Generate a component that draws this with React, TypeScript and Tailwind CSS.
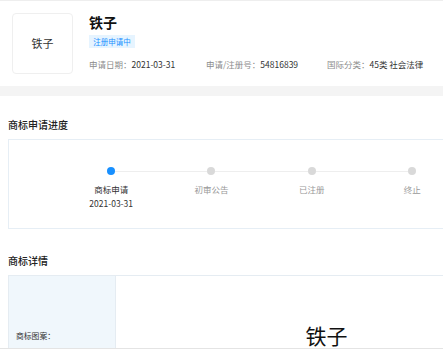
const font = { fontFamily: '"Noto Sans CJK SC", "Noto Sans", sans-serif' };

const steps = [
  { label: "商标申请", date: "2021-03-31", done: true },
  { label: "初审公告", date: "", done: false },
  { label: "已注册", date: "", done: false },
  { label: "终止", date: "", done: false },
];

function Meta({ label, value, className }: { label: string; value: string; className?: string }) {
  return (
    <div className={className}>
      <span className="text-[#8c8c8c]">{label}</span>
      <span className="text-[#333]">{value}</span>
    </div>
  );
}

export default function App() {
  return (
    <div className="w-full h-[358px] overflow-hidden bg-white" style={font}>
      <div className="w-[546px] border-t border-[#eeeeee]">
        {/* header */}
        <div className="flex pl-[12px] pt-[12px] pb-[12px] bg-white">
          <div className="w-[61px] h-[61px] rounded-[4px] border border-[#efefef] flex items-center justify-center text-[11px] text-[#333]">
            铁子
          </div>
          <div className="ml-[16px] flex flex-col">
            <h1 className="text-[14px] leading-[16px] font-bold text-[#111] mt-[1px]">铁子</h1>
            <span className="mt-[5px] w-[46px] h-[13px] flex items-center justify-center bg-[#e6f4ff] text-[#1890ff] text-[7.5px]">
              注册申请中
            </span>
            <div className="flex mt-[10px] text-[8.5px] leading-[12px]">
              <Meta className="w-[117px]" label="申请日期：" value="2021-03-31" />
              <Meta className="w-[121px]" label="申请/注册号：" value="54816839" />
              <Meta label="国际分类：" value="45类 社会法律" />
            </div>
          </div>
        </div>

        <div className="h-[10px] bg-[#f4f4f4]" />

        {/* progress */}
        <div className="px-[8px] pt-[22px]">
          <h2 className="text-[10px] leading-[14px] font-medium text-[#222]">商标申请进度</h2>
          <div className="mt-[7px] h-[90px] border border-[#e6eef5] pt-[27px]">
            <div className="flex items-center pl-[98px]">
              {steps.map((s, i) => (
                <div key={s.label} className="flex items-center">
                  <span
                    className={
                      s.done
                        ? "w-[8px] h-[8px] rounded-full bg-[#1890ff]"
                        : "w-[8px] h-[8px] rounded-full bg-[#d9d9d9]"
                    }
                  />
                  {i < steps.length - 1 && <span className="w-[92.3px] h-px bg-[#eeeeee]" />}
                </div>
              ))}
            </div>
            <div className="flex pl-[52px] mt-[7px] text-[8.5px] leading-[14px]">
              {steps.map((s) => (
                <div key={s.label} className="w-[100.33px] flex flex-col items-center">
                  <span className={s.done ? "text-[#333]" : "text-[#999]"}>{s.label}</span>
                  {s.date && <span className="text-[#333]">{s.date}</span>}
                </div>
              ))}
            </div>
          </div>
        </div>

        {/* details */}
        <div className="px-[8px] pt-[25px]">
          <h2 className="text-[10px] leading-[14px] font-medium text-[#222]">商标详情</h2>
          <div className="mt-[7px] flex border border-[#e5ecf2] h-[122px]">
            <div className="w-[107px] bg-[#f0f7fc] border-r border-[#e5ecf2] flex items-center pl-[7px] text-[7.8px] text-[#333]">
              商标图案：
            </div>
            <div className="flex-1 flex items-center justify-center text-[21px] text-[#111]">
              铁子
            </div>
          </div>
        </div>
      </div>
      <div className="fixed bottom-0 left-0 right-0 h-[10px] bg-white border-t border-[#e4e4e4]" />
    </div>
  );
}
